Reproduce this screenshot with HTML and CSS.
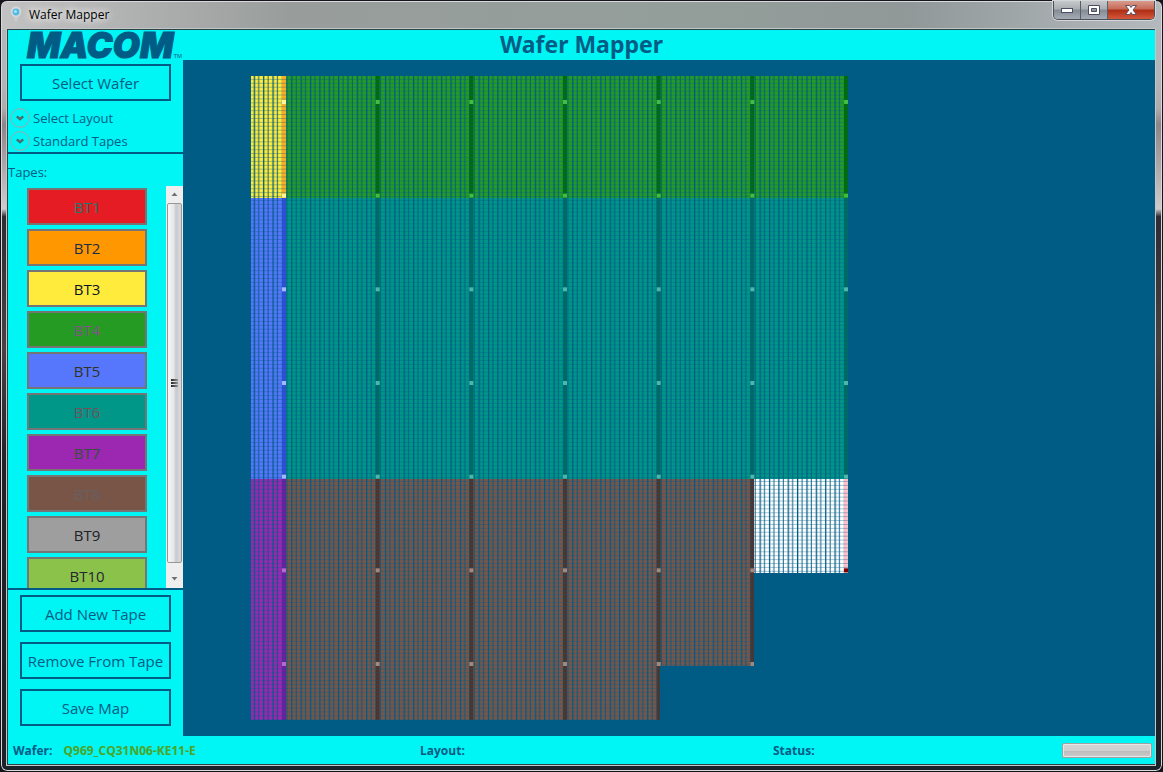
FILE: index.html
```html
<!DOCTYPE html>
<html lang="en">
<head>
<meta charset="utf-8">
<title>Wafer Mapper</title>
<link rel="stylesheet" href="styles.css">
</head>
<body>
<div class="window">
  <div class="titlebar">
    <svg class="app-icon" width="12" height="18" viewBox="0 0 12 18" aria-hidden="true">
      <path d="M6 17 L2.500 9.500 A5.500 5.500 0 1 1 9.500 9.500 Z" fill="#c9cbcc"/>
      <circle cx="6" cy="6" r="5" fill="#d6d9da"/>
      <circle cx="6" cy="6" r="3.400" fill="#4fb9e6"/>
      <circle cx="5.500" cy="5.500" r="1.500" fill="#a9e4fa"/>
    </svg>
    <span class="caption">Wafer Mapper</span>
    <div class="controls">
      <button class="control" aria-label="Minimize"><svg width="14" height="8" viewBox="0 0 14 8"><rect x="1.500" y="2.500" width="11" height="4" fill="#fff" stroke="#4b4e62"/></svg></button>
      <button class="control" aria-label="Maximize"><svg width="14" height="12" viewBox="0 0 14 12"><path d="M1.500 1.500h11v9h-11zM4.500 4.500v3h5v-3z" fill="#fff" fill-rule="evenodd" stroke="#4b4e62"/></svg></button>
      <button class="control close" aria-label="Close"><svg width="14" height="12" viewBox="0 0 14 12"><path d="M1.500 1.500h4l1.500 2 1.500-2h4l-3.500 4.500 3.500 4.500h-4l-1.500-2-1.500 2h-4l3.500-4.500z" fill="#fff" stroke="#5c4d62"/></svg></button>
    </div>
  </div>
  <div class="app">
    <header class="header">
      <div class="logo">MACOM<small>TM</small></div>
      <h1 class="title">Wafer Mapper</h1>
    </header>
    <div class="body">
      <aside class="sidebar">
        <div class="group"><button class="action">Select Wafer</button></div>
        <div class="panes">
          <button class="pane"><svg class="chevron" width="20" height="20" viewBox="0 0 20 20"><circle cx="10" cy="10" r="9.300" fill="none" stroke="#a3a8a8"/><path d="M6.800 8.300 10 11.200 13.200 8.300" fill="none" stroke="#4d6b6b" stroke-width="2.400"/></svg>Select Layout</button>
          <button class="pane"><svg class="chevron" width="20" height="20" viewBox="0 0 20 20"><circle cx="10" cy="10" r="9.300" fill="none" stroke="#a3a8a8"/><path d="M6.800 8.300 10 11.200 13.200 8.300" fill="none" stroke="#4d6b6b" stroke-width="2.400"/></svg>Standard Tapes</button>
        </div>
        <h2 class="label">Tapes:</h2>
        <div class="tapes">
          <div class="tape-list">
            <button class="tape bt1">BT1</button>
            <button class="tape bt2">BT2</button>
            <button class="tape bt3">BT3</button>
            <button class="tape bt4">BT4</button>
            <button class="tape bt5">BT5</button>
            <button class="tape bt6">BT6</button>
            <button class="tape bt7">BT7</button>
            <button class="tape bt8">BT8</button>
            <button class="tape bt9">BT9</button>
            <button class="tape bt10">BT10</button>
          </div>
          <div class="scrollbar" aria-hidden="true">
            <svg class="arrow" width="17" height="17" viewBox="0 0 17 17"><path d="M5.500 10 8.500 6.500 11.500 10z" fill="#707070"/></svg>
            <div class="thumb"><i></i><i></i><i></i></div>
            <svg class="arrow" width="17" height="17" viewBox="0 0 17 17"><path d="M5.500 6 8.500 9.500 11.500 6z" fill="#707070"/></svg>
          </div>
        </div>
        <div class="group bottom">
          <button class="action">Add New Tape</button>
          <button class="action">Remove From Tape</button>
          <button class="action">Save Map</button>
        </div>
      </aside>
      <main class="stage">
        <svg class="map" width="597" height="644" viewBox="0 0 597 644" role="img" aria-label="Wafer die map">
          <defs>
            <pattern id="rows" width="20" height="3.904" patternUnits="userSpaceOnUse"><rect y="2.900" width="20" height="1" fill="#005b85" fill-opacity=".36"/></pattern>
            <pattern id="cols" x="-1" width="9.367" height="20" patternUnits="userSpaceOnUse"><rect x="3.700" width="1.300" height="20" fill="#005b85"/><rect x="8.200" width="1.400" height="20" fill="#005b85" fill-opacity=".8"/></pattern>
            <pattern id="streets" x="31" width="93.670" height="644" patternUnits="userSpaceOnUse"><rect width="4" height="644" fill="#fff"/></pattern>
            <mask id="streetMask"><rect width="597" height="644" fill="url(#streets)"/></mask>
            <pattern id="marks" x="31" y="24" width="93.670" height="93.670" patternUnits="userSpaceOnUse"><rect width="4" height="4" fill="#fff"/></pattern>
            <mask id="markMask"><rect width="597" height="644" fill="url(#marks)"/></mask>
          </defs>
          <g>
            <path fill="#ffeb3b" d="M0 0h35v122H0z"/>
            <path fill="#5677fc" d="M0 122h35v281H0z"/>
            <path fill="#9c27b0" d="M0 403h35v241H0z"/>
            <path fill="#259b24" d="M35 0h562v122H35z"/>
            <path fill="#009688" d="M35 122h562v281H35z"/>
            <path fill="#795548" d="M35 403h468v187h-94v54H35z"/>
            <path fill="#fff" d="M503 403h94v94h-94z"/>
          </g>
          <path fill="url(#cols)" d="M0 0h597v497h-94v93h-94v54H0z"/>
          <g mask="url(#streetMask)">
            <path fill="#f9ad27" d="M0 0h36v122H0z"/>
            <path fill="#304fd8" d="M0 122h36v281H0z"/>
            <path fill="#6a1fa0" d="M0 403h36v241H0z"/>
            <path fill="#006b0c" d="M36 0h561v122H36z"/>
            <path fill="#006a65" d="M36 122h561v281H36z"/>
            <path fill="#4e342e" d="M36 403h467v187h-94v54H36z"/>
            <path fill="#ffc0cb" d="M503 403h94v94h-94z"/>
          </g>
          <path fill="url(#rows)" d="M0 0h597v497h-94v93h-94v54H0z"/>
          <g mask="url(#markMask)">
            <path fill="#fff59d" d="M0 0h36v122H0z"/>
            <path fill="#a6b7ff" d="M0 122h36v281H0z"/>
            <path fill="#b968cc" d="M0 403h36v241H0z"/>
            <path fill="#42bd41" d="M36 0h561v122H36z"/>
            <path fill="#4db6ac" d="M36 122h561v281H36z"/>
            <path fill="#a1887f" d="M36 403h467v188h-94v53H36z"/>
            <path fill="#800000" d="M503 403h94v94h-94z"/>
          </g>
        </svg>
      </main>
    </div>
    <footer class="status">
      <div class="field">Wafer:<span class="wafer">Q969_CQ31N06-KE11-E</span></div>
      <div class="field">Layout:</div>
      <div class="field">Status:<div class="progress" role="progressbar" aria-label="Progress"></div></div>
    </footer>
  </div>
</div>
</body>
</html>
```
FILE: styles.css
```css
* { box-sizing: border-box; }
html, body { height: 100%; }
body {
  margin: 0;
  background: #15151d;
  color: #005b85;
  font-family: "Open Sans", "Noto Sans", sans-serif;
  font-size: 13px;
  overflow: hidden;
}
button { font: inherit; color: inherit; padding: 0; border-radius: 0; }

.window {
  height: 100vh;
  display: flex;
  flex-direction: column;
  padding: 0 7px 6px 6px;
  border: 1px solid #15151d;
  border-radius: 7px;
  box-shadow: inset 0 0 0 1px #d9d9d9;
  background:
    linear-gradient(90deg, #c3c2c2, #989d9b 25%, #939e9a 60%, #909898 78%, #b4b9be) 0 0 / 100% 29px no-repeat,
    linear-gradient(#b4b5b8 10%, #b0aaac 14%, #8d8488 16%, #d0cbcb 27%, #2e2b33 28%, #4b4040 45%, #251f2a 60%, #1b2129);
}
.titlebar { flex: 0 0 28px; display: flex; align-items: center; padding-left: 3px; }
.caption {
  margin-left: 5px;
  padding: 0 2px;
  font-size: 12px;
  line-height: 26px;
  color: #000;
  text-shadow: 0 0 8px #fff, 0 0 8px #fff;
}
.controls {
  align-self: flex-start;
  display: flex;
  margin-left: auto;
  border: 1px solid #4c5058;
  border-top: 0;
  border-radius: 0 0 5px 5px;
  overflow: hidden;
  box-shadow: 0 0 0 1px #d4d6d8;
}
.control {
  width: 27px;
  height: 18px;
  display: grid;
  place-items: center;
  border: 0;
  border-right: 1px solid #595d66;
  background: linear-gradient(#c5c9cc, #a8adb1 45%, #858b92 50%, #a5abb5);
}
.close { width: 46px; border: 0; background: linear-gradient(#d99a8c, #c66955 45%, #ad2c13 50%, #d6583c); }

.app {
  flex: 1;
  min-height: 0;
  display: flex;
  flex-direction: column;
  border: 1px solid #2c4348;
  border-width: 1px 0 1px 1px;
  outline: 1px solid #c2c6c8;
  background: #00f5f5;
}
.header { flex: 0 0 30px; display: grid; grid-template-columns: 175px 1fr 175px; }
.logo {
  display: flex;
  align-items: flex-end;
  padding-left: 19px;
  font: italic 900 35px/30px Inter, sans-serif;
  -webkit-text-stroke: 1px #005b85;
  white-space: nowrap;
}
.logo small { font: 6px/8px "Liberation Sans", sans-serif; -webkit-text-stroke: 0; }
.title { margin: 0; text-align: center; font: 700 23px/28px "Noto Sans", sans-serif; }
.body { flex: 1; min-height: 0; display: flex; }

.sidebar { flex: 0 0 175px; display: flex; flex-direction: column; }
.group { display: flex; flex-direction: column; gap: 10px; padding: 4px 12px 5px; }
.action {
  height: 37px;
  border: 2px solid #005b85;
  background: transparent;
  font-size: 15px;
  white-space: nowrap;
}
.bottom { padding-top: 5px; padding-bottom: 10px; border-top: 2px solid #005b85; }
.panes { display: flex; flex-direction: column; border-bottom: 2px solid #005b85; }
.pane {
  height: 23px;
  display: flex;
  align-items: center;
  gap: 3px;
  padding-left: 2px;
  border: 0;
  background: transparent;
}
.label { margin: 0; padding: 8px 0 4px; font-size: 13px; line-height: 20px; font-weight: 400; }
.tapes { flex: 1; min-height: 0; display: flex; justify-content: space-between; overflow: hidden; }
.tape-list { flex: 0 0 139px; display: flex; flex-direction: column; gap: 4px; padding: 2px 0 0 19px; overflow: hidden; }
.tape { flex: 0 0 37px; border: 2px solid #757575; font-size: 15px; }
.bt1 { background: #e51c23; color: #1a7a70; }
.bt2 { background: #ff9800; color: #1b2b45; }
.bt3 { background: #ffeb3b; color: #0a1428; }
.bt4 { background: #259b24; color: #84508a; }
.bt5 { background: #5677fc; color: #333322; }
.bt6 { background: #009688; color: #75505a; }
.bt7 { background: #9c27b0; color: #35523b; }
.bt8 { background: #795548; color: #666061; }
.bt9 { background: #9e9e9e; color: #202026; }
.bt10 { background: #8bc34a; color: #252535; }
.scrollbar { flex: 0 0 17px; display: flex; flex-direction: column; background: #eeeeee; }
.arrow { flex: 0 0 17px; }
.thumb {
  flex: 1;
  display: flex;
  flex-direction: column;
  justify-content: center;
  align-items: center;
  gap: 1px;
  margin: 0 1px 8px;
  border: 1px solid #979797;
  border-radius: 2px;
  background: linear-gradient(90deg, #f6f6f6, #e6e6e8 45%, #c7cacd 60%, #d8dadc);
}
.thumb i { width: 7px; height: 2px; background: linear-gradient(90deg, #222222, #999999); }

.stage { flex: 1; min-width: 0; padding: 16px 68px; background: #005b85; overflow: hidden; }
.map { display: block; }

.status {
  flex: 0 0 28px;
  display: grid;
  grid-template-columns: 407fr 353fr 379fr;
  padding: 0 3px 0 5px;
  font-size: 12px;
  font-weight: 700;
}
.field { display: flex; align-items: center; }
.wafer { margin-left: 11px; color: #4ca524; }
.progress {
  width: 90px;
  height: 15px;
  margin-left: auto;
  border: 1px solid #a0a0a0;
  border-radius: 2px;
  box-shadow: inset 0 0 0 1px #e6e6e6;
  background: linear-gradient(#d4d4d4, #d0d0d0 50%, #bcbcbc 55%, #cccccc);
}
```
